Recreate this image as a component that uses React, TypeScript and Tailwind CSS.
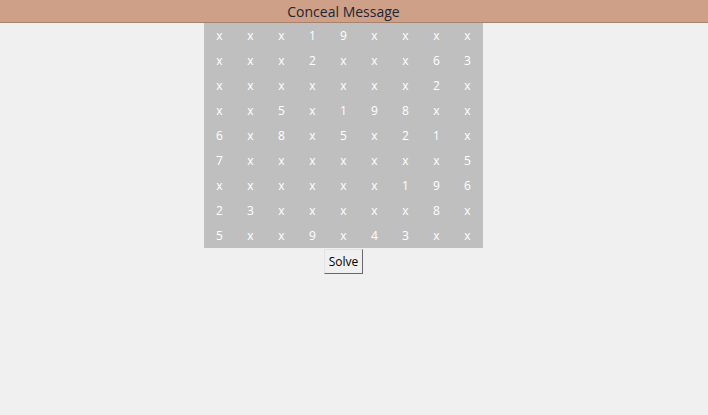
// Conceal Message — sudoku-style grid with hidden cells

const GRID: string[][] = [
  ['x', 'x', 'x', '1', '9', 'x', 'x', 'x', 'x'],
  ['x', 'x', 'x', '2', 'x', 'x', 'x', '6', '3'],
  ['x', 'x', 'x', 'x', 'x', 'x', 'x', '2', 'x'],
  ['x', 'x', '5', 'x', '1', '9', '8', 'x', 'x'],
  ['6', 'x', '8', 'x', '5', 'x', '2', '1', 'x'],
  ['7', 'x', 'x', 'x', 'x', 'x', 'x', 'x', '5'],
  ['x', 'x', 'x', 'x', 'x', 'x', '1', '9', '6'],
  ['2', '3', 'x', 'x', 'x', 'x', 'x', '8', 'x'],
  ['5', 'x', 'x', '9', 'x', '4', '3', 'x', 'x'],
];

export default function App() {
  return (
    <div className="w-[708px] h-[415px] bg-[#f0f0f0] font-['Open_Sans',sans-serif] overflow-hidden">
      {/* Title bar */}
      <div className="h-[23px] bg-[#cda087] border-b border-[#a8826b] flex">
        <div className="w-[687px] pt-[1px] flex items-center justify-center text-[14px] text-[#1f2533] leading-none">
          Conceal Message
        </div>
      </div>

      <div className="w-[687px] flex flex-col items-center">
        {/* Grid */}
        <div className="grid grid-cols-9 w-[279px] bg-[#bfbfbf]">
          {GRID.flat().map((c, i) => (
            <div
              key={i}
              className="h-[25px] pt-[1px] flex items-center justify-center text-[12px] text-white leading-none"
            >
              {c}
            </div>
          ))}
        </div>

        {/* Solve button */}
        <button className="mt-[1px] w-[39px] h-[25px] bg-[#f0f0f0] border border-t-[#e3e3e3] border-l-[#e3e3e3] border-r-[#696969] border-b-[#696969] text-[12px] text-black leading-none font-['Open_Sans',sans-serif]">
          Solve
        </button>
      </div>
    </div>
  );
}
